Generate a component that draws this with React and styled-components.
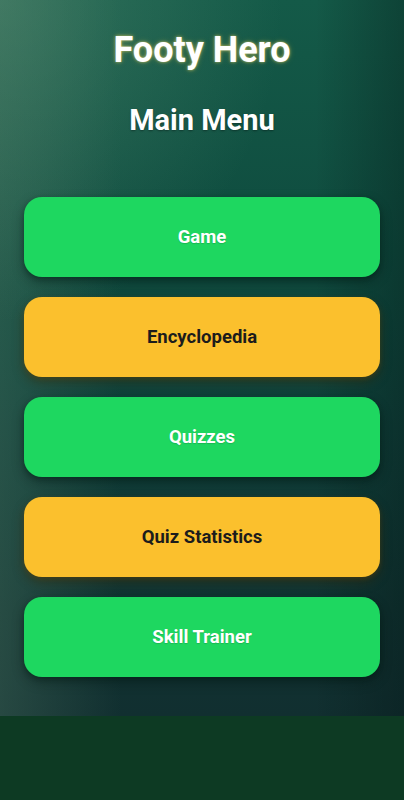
import React from "react";
import styled, { createGlobalStyle } from "styled-components";

const Global = createGlobalStyle`
  html, body { margin: 0; padding: 0; }
  body {
    width: 404px;
    height: 800px;
    overflow: hidden;
    background: #0d3a23;
    font-family: Roboto, "Noto Sans", "Liberation Sans", sans-serif;
  }
`;

const Page = styled.div`
  display: flex;
  flex-direction: column;
  width: 404px;
  height: 800px;
`;

const Screen = styled.main`
  height: 716px;
  box-sizing: border-box;
  padding: 28px 24px 0;
  display: flex;
  flex-direction: column;
  align-items: stretch;
  background:
    radial-gradient(ellipse 70% 45% at 0% 0%, rgba(110, 160, 130, 0.35), rgba(110, 160, 130, 0) 100%),
    linear-gradient(to right, rgba(80, 120, 100, 0.35) 0%, rgba(0, 0, 0, 0) 30%, rgba(0, 0, 0, 0) 78%, rgba(0, 15, 15, 0.3) 100%),
    linear-gradient(to bottom, #145a48 0%, #0f4c3f 35%, #10403a 60%, #113432 85%, #112f30 100%);
`;

const Title = styled.h1`
  margin: 0;
  text-align: center;
  font-size: 36px;
  line-height: 44px;
  font-weight: 700;
  color: #ffffff;
  text-shadow: 0 0 3px rgba(255, 225, 110, 0.7), 0 0 6px rgba(255, 210, 60, 0.25);
`;

const Subtitle = styled.h2`
  margin: 30px 0 0;
  text-align: center;
  font-size: 29px;
  line-height: 36px;
  font-weight: 700;
  color: #ffffff;
  text-shadow: 0 1px 2px rgba(0, 0, 0, 0.35);
`;

const Menu = styled.nav`
  margin-top: 59px;
  display: flex;
  flex-direction: column;
  gap: 20px;
`;

const MenuButton = styled.button`
  height: 80px;
  border: none;
  border-radius: 18px;
  font-family: inherit;
  font-size: 18.5px;
  font-weight: 700;
  cursor: pointer;
  background: ${(p) => (p.$variant === "yellow" ? "#fbc02d" : "#1ed760")};
  color: ${(p) => (p.$variant === "yellow" ? "#1c1c1c" : "#ffffff")};
  box-shadow: ${(p) =>
    p.$variant === "yellow"
      ? "0 5px 12px rgba(60, 40, 0, 0.45), 0 2px 4px rgba(120, 90, 20, 0.35)"
      : "0 5px 12px rgba(0, 20, 15, 0.4), 0 2px 4px rgba(0, 30, 20, 0.3)"};
  text-shadow: ${(p) => (p.$variant === "yellow" ? "none" : "0 1px 1px rgba(0,0,0,0.15)")};
`;

const Footer = styled.div`
  flex: 1;
  background: #0d3a23;
`;

const items = [
  { label: "Game", variant: "green" },
  { label: "Encyclopedia", variant: "yellow" },
  { label: "Quizzes", variant: "green" },
  { label: "Quiz Statistics", variant: "yellow" },
  { label: "Skill Trainer", variant: "green" },
];

export default function App() {
  return (
    <>
      <Global />
      <Page>
        <Screen>
          <Title>Footy Hero</Title>
          <Subtitle>Main Menu</Subtitle>
          <Menu>
            {items.map((it) => (
              <MenuButton key={it.label} $variant={it.variant}>
                {it.label}
              </MenuButton>
            ))}
          </Menu>
        </Screen>
        <Footer />
      </Page>
    </>
  );
}
